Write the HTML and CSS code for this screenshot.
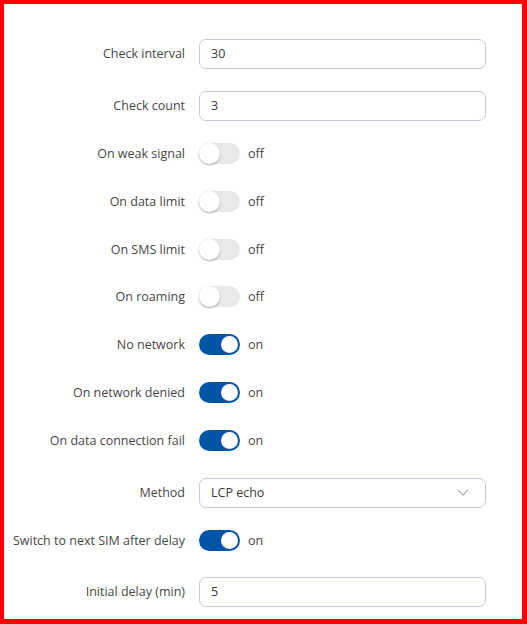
FILE: index.html
```html
<!DOCTYPE html>
<html>
<head>
<meta charset="utf-8">
<link rel="stylesheet" href="styles.css">
</head>
<body>
<div class="frame">
  <div class="form">
    <div class="row row-input">
      <label class="label">Check interval</label>
      <div class="input">30</div>
    </div>
    <div class="row row-input">
      <label class="label">Check count</label>
      <div class="input">3</div>
    </div>
    <div class="row row-toggle">
      <label class="label">On weak signal</label>
      <div class="switch-wrap"><span class="switch"><span class="knob"></span></span><span class="state">off</span></div>
    </div>
    <div class="row row-toggle">
      <label class="label">On data limit</label>
      <div class="switch-wrap"><span class="switch"><span class="knob"></span></span><span class="state">off</span></div>
    </div>
    <div class="row row-toggle">
      <label class="label">On SMS limit</label>
      <div class="switch-wrap"><span class="switch"><span class="knob"></span></span><span class="state">off</span></div>
    </div>
    <div class="row row-toggle">
      <label class="label">On roaming</label>
      <div class="switch-wrap"><span class="switch"><span class="knob"></span></span><span class="state">off</span></div>
    </div>
    <div class="row row-toggle">
      <label class="label">No network</label>
      <div class="switch-wrap"><span class="switch on"><span class="knob"></span></span><span class="state">on</span></div>
    </div>
    <div class="row row-toggle">
      <label class="label">On network denied</label>
      <div class="switch-wrap"><span class="switch on"><span class="knob"></span></span><span class="state">on</span></div>
    </div>
    <div class="row row-toggle">
      <label class="label">On data connection fail</label>
      <div class="switch-wrap"><span class="switch on"><span class="knob"></span></span><span class="state">on</span></div>
    </div>
    <div class="row row-input">
      <label class="label">Method</label>
      <div class="input select">
        <span>LCP echo</span>
        <svg class="chevron" width="12" height="7" viewBox="0 0 12 7"><path d="M1 1 L6 6 L11 1" fill="none" stroke="#a8a8b4" stroke-width="1.1"/></svg>
      </div>
    </div>
    <div class="row row-toggle">
      <label class="label">Switch to next SIM after delay</label>
      <div class="switch-wrap"><span class="switch on"><span class="knob"></span></span><span class="state">on</span></div>
    </div>
    <div class="row row-input">
      <label class="label">Initial delay (min)</label>
      <div class="input">5</div>
    </div>
  </div>
</div>
</body>
</html>
```

FILE: styles.css
```css
html, body {
  margin: 0;
  padding: 0;
  background: #ffffff;
}
.frame {
  box-sizing: border-box;
  width: 527px;
  height: 624px;
  border: 4px solid #ff0000;
  border-right-width: 5px;
  border-bottom-width: 5px;
  padding-top: 35px;
  font-family: "Open Sans", "Noto Sans", sans-serif;
  font-size: 12.5px;
  color: #474747;
  overflow: hidden;
}
.form {
  display: flex;
  flex-direction: column;
}
.row {
  display: grid;
  grid-template-columns: 181px 287px;
  column-gap: 14px;
  align-items: start;
  margin-bottom: 22px;
}
.row-input {
  height: 30px;
}
.row-toggle {
  height: 25.8px;
}
.label {
  text-align: right;
  white-space: nowrap;
}
.row-input .label {
  line-height: 30px;
}
.row-toggle .label {
  line-height: 21px;
}
.input {
  box-sizing: border-box;
  height: 30px;
  border: 1px solid #c9c8d8;
  border-radius: 7px;
  padding: 0 11px;
  line-height: 28px;
  color: #383838;
}
.select {
  display: flex;
  justify-content: space-between;
  align-items: center;
  padding-right: 16px;
}
.chevron {
  display: block;
}
.switch-wrap {
  display: flex;
  align-items: center;
  height: 21px;
  gap: 8px;
}
.switch {
  position: relative;
  box-sizing: border-box;
  width: 41px;
  height: 21px;
  border-radius: 11px;
  background: #e9e9ec;
  display: block;
}
.knob {
  position: absolute;
  left: 0;
  top: 0;
  width: 21px;
  height: 21px;
  box-sizing: border-box;
  border-radius: 50%;
  background: #ffffff;
  box-shadow: 0 1px 2px rgba(0, 0, 0, 0.35);
}
.switch.on {
  background: #0054a8;
}
.switch.on .knob {
  left: auto;
  right: 2px;
  top: 2px;
  width: 17px;
  height: 17px;
  box-shadow: none;
}
.state {
  line-height: 21px;
  color: #474747;
}
```
